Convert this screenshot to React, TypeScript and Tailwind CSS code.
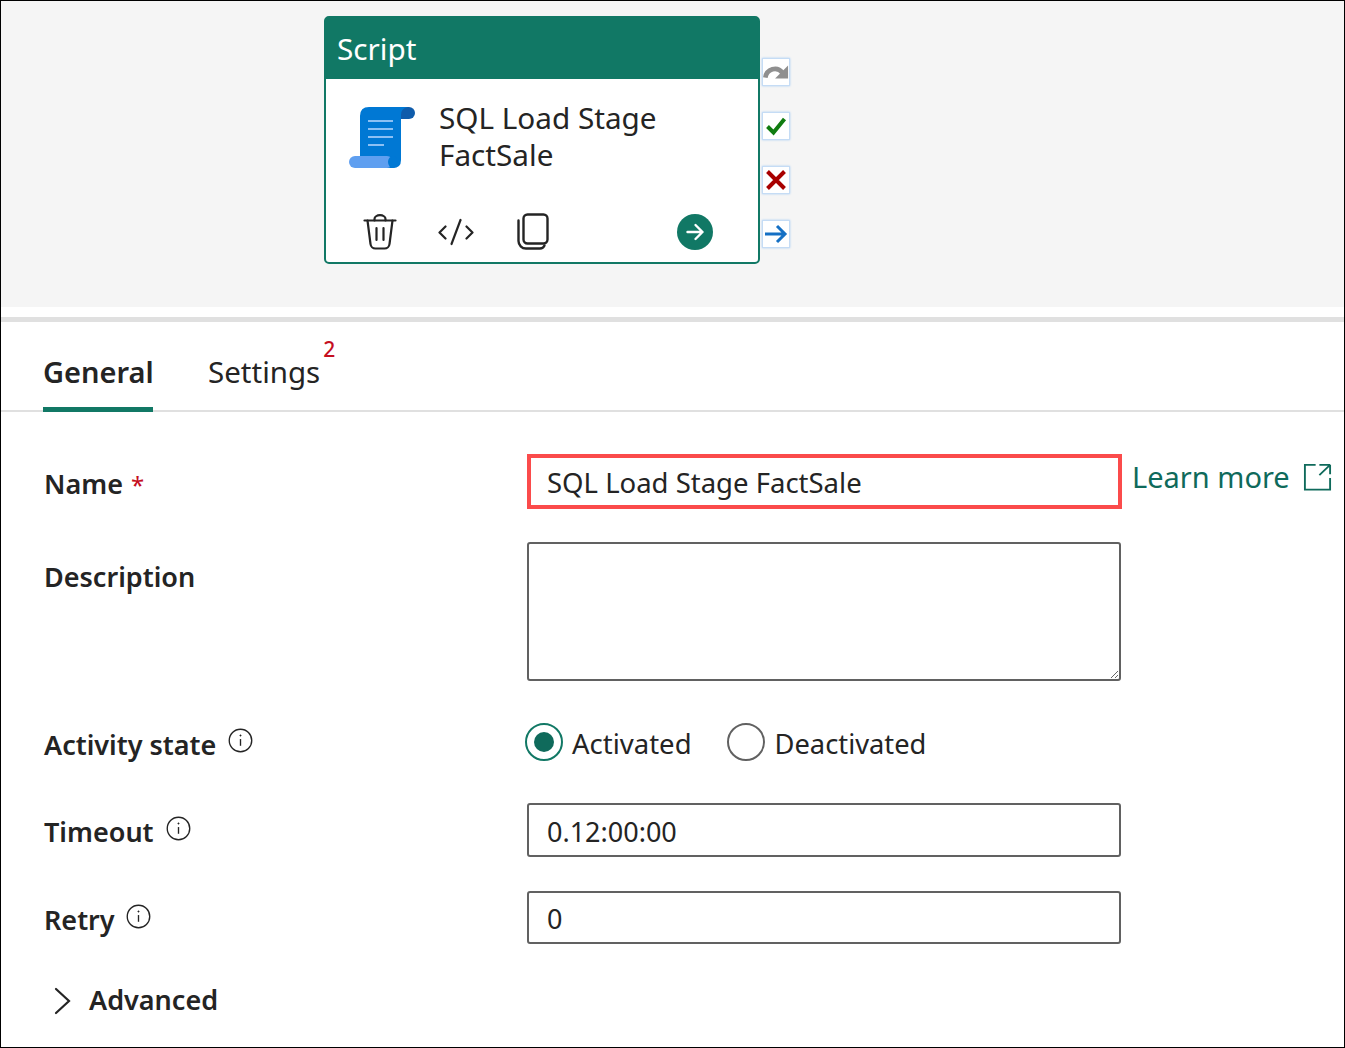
const InfoIcon = () => (
  <svg width="25" height="25" viewBox="0 0 26 26" fill="none" stroke="#242424" strokeWidth="1.4">
    <circle cx="13" cy="13" r="11.7" />
    <path d="M13 11.5v7" />
    <circle cx="13" cy="7.8" r="0.7" fill="#242424" strokeWidth="0.6" />
  </svg>
);

const ScriptIcon = () => (
  <svg width="66" height="62" viewBox="0 0 66 62">
    <path d="M52 0H60a6 6 0 0 1 0 12H50V4Z" fill="#0f5cab" />
    <path d="M11 9Q11 0 20 0H59Q52 1 52 8V53Q52 61 44 61H11Z" fill="#0078d4" />
    <rect x="0" y="49" width="44" height="12" rx="6" fill="#5f9ff0" />
    <ellipse cx="44" cy="55" rx="5" ry="6" fill="#0078d4" />
    <path d="M19 14H44M19 22H44M19 30H44M19 38H35" stroke="#8cc0f4" strokeWidth="2.2" />
  </svg>
);

const TrashIcon = () => (
  <svg width="34" height="36" viewBox="0 0 34 36" fill="none" stroke="#242424" strokeWidth="2.2" strokeLinecap="round" strokeLinejoin="round">
    <path d="M1.500 6.500H32.500" />
    <path d="M11.500 6.500V5a5.500 3.800 0 0 1 11 0v1.500" />
    <path d="M4.500 6.500L7.500 30a5 5 0 0 0 5 4.500h9a5 5 0 0 0 5-4.500L29.500 6.500" />
    <path d="M13.500 14V26M20.500 14V26" />
  </svg>
);

const CodeIcon = () => (
  <svg width="36" height="28" viewBox="0 0 36 28" fill="none" stroke="#242424" strokeWidth="2.2" strokeLinecap="round" strokeLinejoin="round">
    <path d="M7.500 8.500L1.500 14.500L7.500 20.500" />
    <path d="M28.500 8.500L34.500 14.500L28.500 20.500" />
    <path d="M22.500 2L13.500 26" />
  </svg>
);

const CopyIcon = () => (
  <svg width="32" height="37" viewBox="0 0 32 37" fill="none" stroke="#242424" strokeWidth="2.4" strokeLinecap="round">
    <rect x="6.500" y="1.500" width="24" height="29" rx="4" />
    <path d="M1.500 7.500V28a7.500 7.500 0 0 0 7.500 7.500H23a5 5 0 0 0 4.500-3" />
  </svg>
);

const PortBox = ({ children }: { children: React.ReactNode }) => (
  <div className="flex h-[28px] w-[28px] items-center justify-center border border-[#c5dcf5] bg-white shadow-[0_0_2px_#a9cdf3]">
    {children}
  </div>
);

const labelClass = 'text-[27px] font-semibold leading-[38px] text-[#242424]';
const inputClass =
  'h-full w-full rounded-[3px] border-2 border-[#616161] bg-white pl-[18px] pt-[2px] text-[27px] text-[#242424] outline-none';

export default function App() {
  return (
    <div
      className="box-border flex h-[1048px] w-[1345px] flex-col border border-black bg-white"
      style={{ fontFamily: '"Noto Sans", "Open Sans", sans-serif' }}
    >
      {/* Pipeline canvas */}
      <div className="flex h-[306px] bg-[#f5f5f5] pl-[323px] pt-[15px]">
        <div className="box-border flex h-[248px] w-[436px] flex-col rounded-[5px] border-2 border-[#117865] bg-white">
          <div className="flex h-[61px] items-center bg-[#117865] pl-[11px] pt-[2px] text-[29.7px] text-white">Script</div>
          <div className="flex flex-1 flex-col pl-[23px]">
            <div className="flex gap-[24px] pt-[28px]">
              <div>
                <ScriptIcon />
              </div>
              <div className="-mt-[8px] text-[29.700px] leading-[37px] text-[#242424]">
                SQL Load Stage
                <br />
                FactSale
              </div>
            </div>
            <div className="mt-[40px] flex items-center pl-[14px]">
              <TrashIcon />
              <div className="ml-[41px]">
                <CodeIcon />
              </div>
              <div className="ml-[43px]">
                <CopyIcon />
              </div>
              <div className="ml-[128px] flex h-[36px] w-[36px] items-center justify-center rounded-full bg-[#117865]">
                <svg width="20" height="20" viewBox="0 0 20 20" fill="none" stroke="white" strokeWidth="2.4" strokeLinecap="round" strokeLinejoin="round">
                  <path d="M2.500 10H17.500M10.500 3L17.500 10L10.500 17" />
                </svg>
              </div>
            </div>
          </div>
        </div>
        <div className="ml-[2px] mt-[42px] flex flex-col gap-[26px]">
          <PortBox>
            <svg width="28" height="22" viewBox="0 0 28 22" fill="none">
              <path d="M2.500 17C4 8 15 4 21 12" stroke="#8f8f8f" strokeWidth="5" />
              <path d="M27 4V18H13Z" fill="#8f8f8f" />
            </svg>
          </PortBox>
          <PortBox>
            <svg width="22" height="20" viewBox="0 0 22 20" fill="none">
              <path d="M2.500 10.500L8.500 16.500L19.500 3" stroke="#107c10" strokeWidth="4" />
            </svg>
          </PortBox>
          <PortBox>
            <svg width="22" height="22" viewBox="0 0 22 22" fill="none">
              <path d="M2.500 2.500L19.500 19.500M19.500 2.500L2.500 19.500" stroke="#a80000" strokeWidth="4" />
            </svg>
          </PortBox>
          <PortBox>
            <svg width="24" height="20" viewBox="0 0 24 20" fill="none" stroke="#1570c4" strokeWidth="3">
              <path d="M1 10H21M13 2L21 10L13 18" />
            </svg>
          </PortBox>
        </div>
      </div>

      {/* Divider */}
      <div className="h-[10px] bg-white" />
      <div className="h-[5px] bg-[#e0e0e0]" />

      {/* Tabs */}
      <div className="flex h-[90px] border-b-2 border-[#e0e0e0] pl-[42px]">
        <div className="relative flex h-[90px] w-[110px] items-start border-b-[5px] border-[#117865] pt-[30px]">
          <span className="text-[29px] font-semibold leading-[40px] text-[#242424]">General</span>
        </div>
        <div className="relative ml-[55px] pt-[30px]">
          <span className="text-[29.500px] leading-[40px] text-[#242424]">Settings</span>
          <span className="absolute -right-[15px] top-[14px] text-[21px] font-medium leading-[26px] text-[#c50f1f]">2</span>
        </div>
      </div>

      {/* Form */}
      <div className="flex flex-col pl-[43px]">
        <div className="mt-[42px] flex h-[55px]">
          <div className={`w-[483px] pt-[11px] ${labelClass}`}>
            Name <span className="ml-[1px] text-[24px] font-normal text-[#c50f1f]">*</span>
          </div>
          <input
            readOnly
            value="SQL Load Stage FactSale"
            className="box-border h-full w-[595px] border-4 border-[#fb4b4b] bg-white pl-[16px] pt-[2px] text-[27.500px] text-[#242424] outline-none"
          />
          <a className="ml-[10px] flex h-[46px] items-center gap-[13px] text-[29px] text-[#0f6a5b]">
            Learn more
            <svg width="29" height="28" viewBox="0 0 30 30" fill="none" stroke="#0f6a5b" strokeWidth="2">
              <path d="M13 2H1.500V28.500H28.500V16" />
              <path d="M17 2H28.500M28.500 2L17 13M28.500 2V12" />
            </svg>
          </a>
        </div>

        <div className="mt-[33px] flex h-[139px]">
          <div className={`w-[483px] pt-[16px] ${labelClass}`}>Description</div>
          <div className="w-[594px]">
            <textarea readOnly className={inputClass} />
          </div>
        </div>

        <div className="mt-[42px] flex h-[38px]">
          <div className={`flex w-[483px] gap-[12px] pt-[3px] ${labelClass}`}>
            Activity state
            <div className="mt-[2px]">
              <InfoIcon />
            </div>
          </div>
          <div className="-ml-[2px] flex items-center">
            <div className="flex h-[38px] w-[38px] items-center justify-center rounded-full border-2 border-[#117865]">
              <div className="h-[20px] w-[20px] rounded-full bg-[#0f6a5b]" />
            </div>
            <span className="ml-[9px] pt-[4px] text-[27.500px] text-[#242424]">Activated</span>
            <div className="ml-[35px] h-[38px] w-[38px] rounded-full border-2 border-[#616161]" />
            <span className="ml-[10px] pt-[4px] text-[27.300px] text-[#242424]">Deactivated</span>
          </div>
        </div>

        <div className="mt-[42px] flex h-[54px]">
          <div className={`flex w-[483px] gap-[12px] pt-[10px] ${labelClass}`}>
            Timeout
            <div className="mt-[3px]">
              <InfoIcon />
            </div>
          </div>
          <div className="w-[594px]">
            <input readOnly value="0.12:00:00" className={inputClass} />
          </div>
        </div>

        <div className="mt-[34px] flex h-[53px]">
          <div className={`flex w-[483px] gap-[11px] pt-[10px] ${labelClass}`}>
            Retry
            <div className="mt-[3px]">
              <InfoIcon />
            </div>
          </div>
          <div className="w-[594px]">
            <input readOnly value="0" className={inputClass} />
          </div>
        </div>

        <div className="mt-[37px] flex items-center pl-[9px]">
          <svg className="translate-y-[1px]" width="18" height="28" viewBox="0 0 18 28" fill="none" stroke="#242424" strokeWidth="2.2" strokeLinecap="round">
            <path d="M3 2L16 14L3 26" />
          </svg>
          <span className={`ml-[18px] ${labelClass}`}>Advanced</span>
        </div>
      </div>
    </div>
  );
}
